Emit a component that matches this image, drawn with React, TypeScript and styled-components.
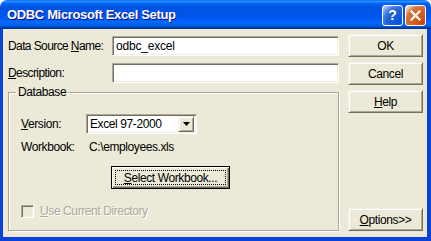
import React from 'react';
import styled, { createGlobalStyle } from 'styled-components';

const GlobalStyle = createGlobalStyle`
  html, body {
    margin: 0;
    padding: 0;
    background: #ffffff;
  }
`;

const FONT = `"Liberation Sans", Arial, sans-serif`;

function App() {
  return (
    <>
      <GlobalStyle />
      <Window>
        <TitleBar>
          <Title>ODBC Microsoft Excel Setup</Title>
          <TitleButtons>
            <CaptionButton $kind="help">?</CaptionButton>
            <CaptionButton $kind="close">
              <svg width="11" height="11" viewBox="0 0 11 11">
                <path d="M1.5 1.5 L9.5 9.5 M9.5 1.5 L1.5 9.5" stroke="#fff" strokeWidth="2.2" strokeLinecap="square" />
              </svg>
            </CaptionButton>
          </TitleButtons>
        </TitleBar>
        <Client>
          <MainColumn>
            <FieldRow>
              <Label>
                Data Source <u>N</u>ame:
              </Label>
              <TextBox>odbc_excel</TextBox>
            </FieldRow>
            <FieldRow $gap>
              <Label>
                <u>D</u>escription:
              </Label>
              <TextBox />
            </FieldRow>
            <GroupBox>
              <GroupTitle>Database</GroupTitle>
              <GroupRow>
                <GroupLabel>
                  <u>V</u>ersion:
                </GroupLabel>
                <ComboBox>
                  <ComboText>Excel 97-2000</ComboText>
                  <ComboArrow>
                    <svg width="7" height="4" viewBox="0 0 7 4">
                      <path d="M0 0 H7 L3.5 4 Z" fill="#000" />
                    </svg>
                  </ComboArrow>
                </ComboBox>
              </GroupRow>
              <WorkbookRow>
                <GroupLabel>Workbook:</GroupLabel>
                <WorkbookPath>C:\employees.xls</WorkbookPath>
              </WorkbookRow>
              <SelectButton>
                <FocusRing>
                  <u>S</u>elect Workbook...
                </FocusRing>
              </SelectButton>
              <CheckRow>
                <CheckBox />
                <DisabledText>
                  <u>U</u>se Current Directory
                </DisabledText>
              </CheckRow>
            </GroupBox>
          </MainColumn>
          <ButtonColumn>
            <PushButton>OK</PushButton>
            <PushButton>Cancel</PushButton>
            <PushButton>
              <u>H</u>elp
            </PushButton>
            <Spacer />
            <PushButton>
              <u>O</u>ptions&gt;&gt;
            </PushButton>
          </ButtonColumn>
        </Client>
      </Window>
    </>
  );
}

const Window = styled.div`
  width: 431px;
  height: 241px;
  display: flex;
  flex-direction: column;
  font-family: ${FONT};
  font-size: 12px;
  letter-spacing: -0.4px;
  color: #000;
  overflow: hidden;
  border-radius: 7px 7px 0 0;
`;

const TitleBar = styled.div`
  height: 29px;
  flex: none;
  display: flex;
  align-items: center;
  justify-content: space-between;
  padding: 0 5px 0 7px;
  box-sizing: border-box;
  background: linear-gradient(
    to bottom,
    #0058ee 0%,
    #3593ff 4%,
    #288eff 6%,
    #127dff 8%,
    #036ffc 10%,
    #0262ee 14%,
    #0057e5 20%,
    #0054e3 24%,
    #0055eb 56%,
    #005bf5 66%,
    #026afe 76%,
    #0062ef 86%,
    #0052d6 92%,
    #0040ab 94%,
    #003092 100%
  );
`;

const Title = styled.div`
  color: #fff;
  font-weight: bold;
  font-size: 13px;
  letter-spacing: -0.35px;
  text-shadow: 1px 1px #0f1089;
  padding-bottom: 1px;
`;

const TitleButtons = styled.div`
  display: flex;
  gap: 2px;
  padding-top: 1px;
`;

const CaptionButton = styled.div<{ $kind: 'help' | 'close' }>`
  width: 21px;
  height: 21px;
  box-sizing: border-box;
  border: 1px solid #fff;
  border-radius: 3px;
  display: flex;
  align-items: center;
  justify-content: center;
  color: #fff;
  font-weight: bold;
  font-size: 14px;
  letter-spacing: 0;
  background: ${(p) =>
    p.$kind === 'close'
      ? 'radial-gradient(circle at 90% 90%, #cc4600 0%, #dc6527 55%, #cd7546 70%, #ffccb2 90%, #fff 100%)'
      : 'radial-gradient(circle at 90% 90%, #0054e9 0%, #2263d5 55%, #4479e4 70%, #a3bbec 90%, #fff 100%)'};
`;

const Client = styled.div`
  flex: 1;
  display: flex;
  background: #ece9d8;
  border-left: 3px solid #0842d9;
  border-right: 4px solid #0842d9;
  border-bottom: 4px solid #0842d9;
`;

const MainColumn = styled.div`
  width: 331px;
  padding: 7px 0 0 5px;
  display: flex;
  flex-direction: column;
`;

const FieldRow = styled.div<{ $gap?: boolean }>`
  display: flex;
  align-items: center;
  margin-top: ${(p) => (p.$gap ? '7px' : '0')};
`;

const Label = styled.div`
  width: 104px;
  letter-spacing: -0.6px;
`;

const sunken = `
  box-sizing: border-box;
  border: 1px solid;
  border-color: #aca899 #ffffff #ffffff #aca899;
  box-shadow: inset 1px 1px 0 #716f64, inset -1px -1px 0 #f1efe2;
`;

const raised = `
  box-sizing: border-box;
  border: 1px solid;
  border-color: #f1efe2 #716f64 #716f64 #f1efe2;
  box-shadow: inset 1px 1px 0 #ffffff, inset -1px -1px 0 #aca899;
  background: #ece9d8;
`;

const TextBox = styled.div`
  ${sunken}
  width: 227px;
  height: 20px;
  background: #fff;
  padding: 0 3px;
  display: flex;
  align-items: center;
  letter-spacing: -0.2px;
`;

const GroupBox = styled.div`
  position: relative;
  margin-top: 9px;
  height: 139px;
  box-sizing: border-box;
  border: 1px solid #aca899;
  box-shadow: inset 1px 1px 0 #fff, 1px 1px 0 #fff;
  padding: 21px 0 0 12px;
  display: flex;
  flex-direction: column;
  align-items: flex-start;
`;

const GroupTitle = styled.div`
  position: absolute;
  top: -7px;
  left: 7px;
  padding: 0 2px;
  background: #ece9d8;
  line-height: 13px;
`;

const GroupRow = styled.div`
  display: flex;
  align-items: center;
`;

const GroupLabel = styled.div`
  width: 65px;
`;

const ComboBox = styled.div`
  ${sunken}
  width: 111px;
  height: 20px;
  background: #fff;
  display: flex;
  align-items: center;
  padding: 2px;
`;

const ComboText = styled.div`
  flex: 1;
  padding-left: 1px;
`;

const ComboArrow = styled.div`
  ${raised}
  width: 16px;
  height: 16px;
  display: flex;
  align-items: center;
  justify-content: center;
`;

const WorkbookRow = styled.div`
  display: flex;
  align-items: center;
  margin-top: 7px;
  line-height: 13px;
`;

const WorkbookPath = styled.div`
  padding-left: 3px;
`;

const SelectButton = styled.div`
  margin: 12px 0 0 90px;
  width: 119px;
  height: 23px;
  box-sizing: border-box;
  border: 1px solid #000;
  background: #ece9d8;
  box-shadow: inset 1px 1px 0 #fff, inset -1px -1px 0 #716f64, inset -2px -2px 0 #aca899;
  padding: 3px;
  display: flex;
`;

const FocusRing = styled.div`
  flex: 1;
  border: 1px dotted #000;
  display: flex;
  align-items: center;
  justify-content: center;
`;

const CheckRow = styled.div`
  display: flex;
  align-items: center;
  gap: 6px;
  margin-top: 15px;
`;

const CheckBox = styled.div`
  ${sunken}
  width: 13px;
  height: 13px;
  background: #ece9d8;
`;

const DisabledText = styled.div`
  color: #aca899;
  text-shadow: 1px 1px 0 #fff;
`;

const ButtonColumn = styled.div`
  margin-left: 9px;
  padding: 5px 0 6px;
  display: flex;
  flex-direction: column;
  gap: 5px;
`;

const Spacer = styled.div`
  flex: 1;
`;

const PushButton = styled.div`
  ${raised}
  width: 75px;
  height: 23px;
  display: flex;
  align-items: center;
  justify-content: center;
`;

export default App;
